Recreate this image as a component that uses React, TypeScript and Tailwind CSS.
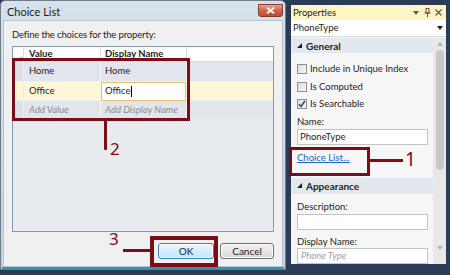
export default function App() {
  return (
    <div className="relative w-[450px] h-[275px] overflow-hidden bg-[#2b3b58] font-['Lato',sans-serif] text-[9.5px] leading-none text-[#1e1e1e]">
      <div className="flex h-full">
        <ChoiceDialog />
        <PropertiesPanel />
      </div>

      {/* annotation 2 */}
      <div className="absolute left-[12px] top-[58px] w-[178px] h-[63px] border-[3px] border-[#7c0c18]" />
      <div className="absolute left-[104px] top-[121px] w-[3px] h-[29px] bg-[#7c0c18] rounded-b-[1px]" />
      <span className="absolute left-[110px] top-[140px] font-['Noto_Sans',sans-serif] text-[17px] text-[#7c0c18]">2</span>

      {/* annotation 3 */}
      <div className="absolute left-[150px] top-[236px] w-[68px] h-[31px] border-[4px] border-[#7c0c18]" />
      <div className="absolute left-[123px] top-[249px] w-[27px] h-[3px] bg-[#7c0c18]" />
      <span className="absolute left-[109px] top-[230px] font-['Noto_Sans',sans-serif] text-[17px] text-[#7c0c18]">3</span>

      {/* annotation 1 */}
      <div className="absolute left-[289px] top-[147px] w-[81px] h-[29px] border-[3px] border-[#7c0c18]" />
      <div className="absolute left-[370px] top-[159px] w-[33px] h-[3px] bg-[#7c0c18]" />
      <span className="absolute left-[405px] top-[150px] font-['Noto_Sans',sans-serif] text-[19px] text-[#7c0c18]">1</span>
    </div>
  );
}

function ChoiceDialog() {
  return (
    <div className="w-[286px] h-[270px] flex flex-col rounded-t-[5px] border border-[#6f7b88] bg-gradient-to-b from-[#d6e1ec] to-[#c7d3e0]">
      {/* title bar */}
      <div className="h-[19px] flex items-center justify-between pl-[6px] pr-[2px]">
        <span className="text-[11px] text-[#1b1b1b] pt-[2px]">Choice List</span>
        <button className="self-start mt-[3px] w-[25px] h-[13px] rounded-b-[3px] border border-[#8a3a2c] bg-gradient-to-b from-[#eaa592] via-[#d0604a] to-[#c44c36] flex items-center justify-center">
          <svg width="9" height="7" viewBox="0 0 9 7">
            <path d="M1 0.8 L8 6.2 M8 0.8 L1 6.2" stroke="#ffffff" strokeWidth="2" />
          </svg>
        </button>
      </div>

      {/* client area */}
      <div className="flex-1 mx-[2px] bg-[#f0f0f0] border border-[#b9c4d0] flex flex-col pl-[8px] pr-[8px]">
        <p className="mt-[9px] tracking-[-0.15px]">Define the choices for the property:</p>

        <div className="mt-[6px] h-[186px] border border-[#8499b0] bg-[#e8ebef] flex flex-col">
          {/* header */}
          <div className="h-[15px] flex bg-white border-b border-[#d8dde5]">
            <div className="w-[11px] border-r border-[#d8dde5] flex items-end justify-end p-[1px]">
              <svg width="4" height="4" viewBox="0 0 4 4">
                <polygon points="4,0 4,4 0,4" fill="#b7bcc4" />
              </svg>
            </div>
            <div className="w-[77px] border-r border-[#d8dde5] flex items-center pl-[5px] font-bold">Value</div>
            <div className="w-[86px] border-r border-[#d8dde5] flex items-center pl-[4px] font-bold">Display Name</div>
            <div className="flex-1" />
          </div>

          {/* Home */}
          <div className="h-[20px] flex bg-[#e2e5ec] border-b border-[#eef0f4]">
            <div className="w-[11px] bg-[#dde1e8] border-r border-[#eef0f4]" />
            <div className="w-[77px] border-r border-[#f3f4f7] flex items-center pl-[5px]">Home</div>
            <div className="w-[86px] border-r border-[#f3f4f7] flex items-center pl-[4px]">Home</div>
            <div className="flex-1" />
          </div>

          {/* Office */}
          <div className="h-[19px] flex bg-[#fff5d8] border-b border-[#eef0f4]">
            <div className="w-[11px] bg-[#fff5d8] border-r border-[#f3ead0]" />
            <div className="w-[77px] flex items-center pl-[5px]">Office</div>
            <div className="w-[85px] h-[19px] border border-[#e6c36a] bg-white flex items-center pl-[3px]">
              Office<span className="inline-block w-[1px] h-[11px] bg-black ml-[1px]" />
            </div>
            <div className="flex-1" />
          </div>

          {/* Add */}
          <div className="h-[18px] flex bg-[#e2e5ec] italic text-[#8b8d92]">
            <div className="w-[11px] bg-[#dde1e8] border-r border-[#eef0f4]" />
            <div className="w-[77px] border-r border-[#f3f4f7] flex items-center pl-[5px]">Add Value</div>
            <div className="w-[86px] border-r border-[#f3f4f7] flex items-center pl-[4px]">Add Display Name</div>
            <div className="flex-1" />
          </div>
        </div>

        <div className="mt-[11px] flex justify-end gap-[6px]">
          <button className="w-[56px] h-[16px] rounded-[3px] border border-[#3c7fb1] bg-gradient-to-b from-[#eaf6fd] to-[#bee6fd] shadow-[inset_0_0_0_1px_#ffffff] text-[10px] text-[#1e1e1e] flex items-center justify-center">
            OK
          </button>
          <button className="w-[54px] h-[16px] rounded-[3px] border border-[#707070] bg-gradient-to-b from-[#f2f2f2] to-[#d8d8d8] shadow-[inset_0_0_0_1px_#fbfbfb] text-[10px] text-[#1e1e1e] flex items-center justify-center">
            Cancel
          </button>
        </div>
      </div>
      <div className="h-[2px] mx-[1px] bg-[#3596a8]" />
    </div>
  );
}

function SectionHeader({ label, h }: { label: string; h: string }) {
  return (
    <div className={`${h} bg-[#e3e8ef] flex items-center pl-[6px] gap-[4px]`}>
      <svg width="5" height="5" viewBox="0 0 5 5">
        <polygon points="5,0 5,5 0,5" fill="#1e1e1e" />
      </svg>
      <span className="font-bold text-[10px]">{label}</span>
    </div>
  );
}

function CheckRow({ label, checked }: { label: string; checked?: boolean }) {
  return (
    <div className="h-[18px] flex items-center pl-[6px] gap-[3px]">
      <div className="w-[10px] h-[10px] border border-[#8e8f8f] bg-gradient-to-br from-[#dcdcdc] to-[#f8f8f8] flex items-center justify-center">
        {checked && (
          <svg width="8" height="8" viewBox="0 0 8 8">
            <path d="M1 4.2 L3 6.5 L7 1" fill="none" stroke="#2a4d8a" strokeWidth="1.6" />
          </svg>
        )}
      </div>
      <span>{label}</span>
    </div>
  );
}

function PropertiesPanel() {
  return (
    <div className="ml-[5px] mt-[5px] w-[155px] h-[259px] flex flex-col bg-[#f6f6f6]">
      {/* title */}
      <div className="h-[15px] bg-[#fff4c4] flex items-center pl-[2px] pr-[4px]">
        <span className="flex-1">Properties</span>
        <svg width="6" height="4" viewBox="0 0 6 4" className="mr-[5px]">
          <polygon points="0,0 6,0 3,4" fill="#595959" />
        </svg>
        <svg width="7" height="9" viewBox="0 0 7 9" className="mr-[4px]">
          <path d="M2 0.5 H5 V5 H2 Z M0.5 5 H6.5 M3.5 5 V9" fill="none" stroke="#6b4a2a" strokeWidth="1" />
        </svg>
        <svg width="7" height="7" viewBox="0 0 7 7">
          <path d="M0.5 0.5 L6.5 6.5 M6.5 0.5 L0.5 6.5" stroke="#595959" strokeWidth="1.2" />
        </svg>
      </div>

      {/* dropdown */}
      <div className="h-[17px] bg-white border-b border-[#dadada] flex items-center pl-[2px] pr-[3px]">
        <span className="flex-1">PhoneType</span>
        <svg width="6" height="4" viewBox="0 0 6 4">
          <polygon points="0,0 6,0 3,4" fill="#1e1e1e" />
        </svg>
      </div>

      <div className="flex-1 flex mt-[1px] overflow-hidden">
        <div className="flex-1 flex flex-col">
          <SectionHeader label="General" h="h-[16px]" />
          <div className="h-[7px] shrink-0" />
          <CheckRow label="Include in Unique Index" />
          <CheckRow label="Is Computed" />
          <CheckRow label="Is Searchable" checked />
          <div className="h-[16px] shrink-0 flex items-end pl-[6px] pb-[2px]">Name:</div>
          <div className="shrink-0 ml-[6px] mr-[5px] h-[16px] border border-[#c4c4c4] bg-white flex items-center pl-[2px]">PhoneType</div>
          <div className="h-[27px] shrink-0 flex items-center pl-[6px]">
            <span className="text-[#1a66c7] underline">Choice List...</span>
          </div>
          <div className="h-[6px] shrink-0" />
          <SectionHeader label="Appearance" h="h-[17px]" />
          <div className="h-[20px] shrink-0 flex items-end pl-[6px] pb-[2px]">Description:</div>
          <div className="shrink-0 ml-[6px] mr-[5px] h-[16px] border border-[#c4c4c4] bg-white" />
          <div className="h-[18px] shrink-0 flex items-end pl-[6px] pb-[1px]">Display Name:</div>
          <div className="shrink-0 ml-[6px] mr-[5px] h-[16px] border border-[#c4c4c4] bg-white flex items-center pl-[3px] italic text-[#a0a0a0]">Phone Type</div>
        </div>

        {/* scrollbar */}
        <div className="w-[13px] bg-[#e8e8e8] flex flex-col items-center">
          <svg width="6" height="4" viewBox="0 0 6 4" className="mt-[4px]">
            <polygon points="0,4 6,4 3,0" fill="#b4b4b4" />
          </svg>
          <div className="mt-[4px] w-[8px] h-[120px] rounded-[4px] bg-[#c8c8c8]" />
          <div className="flex-1" />
          <svg width="6" height="4" viewBox="0 0 6 4" className="mb-[14px]">
            <polygon points="0,0 6,0 3,4" fill="#b4b4b4" />
          </svg>
        </div>
      </div>
    </div>
  );
}
